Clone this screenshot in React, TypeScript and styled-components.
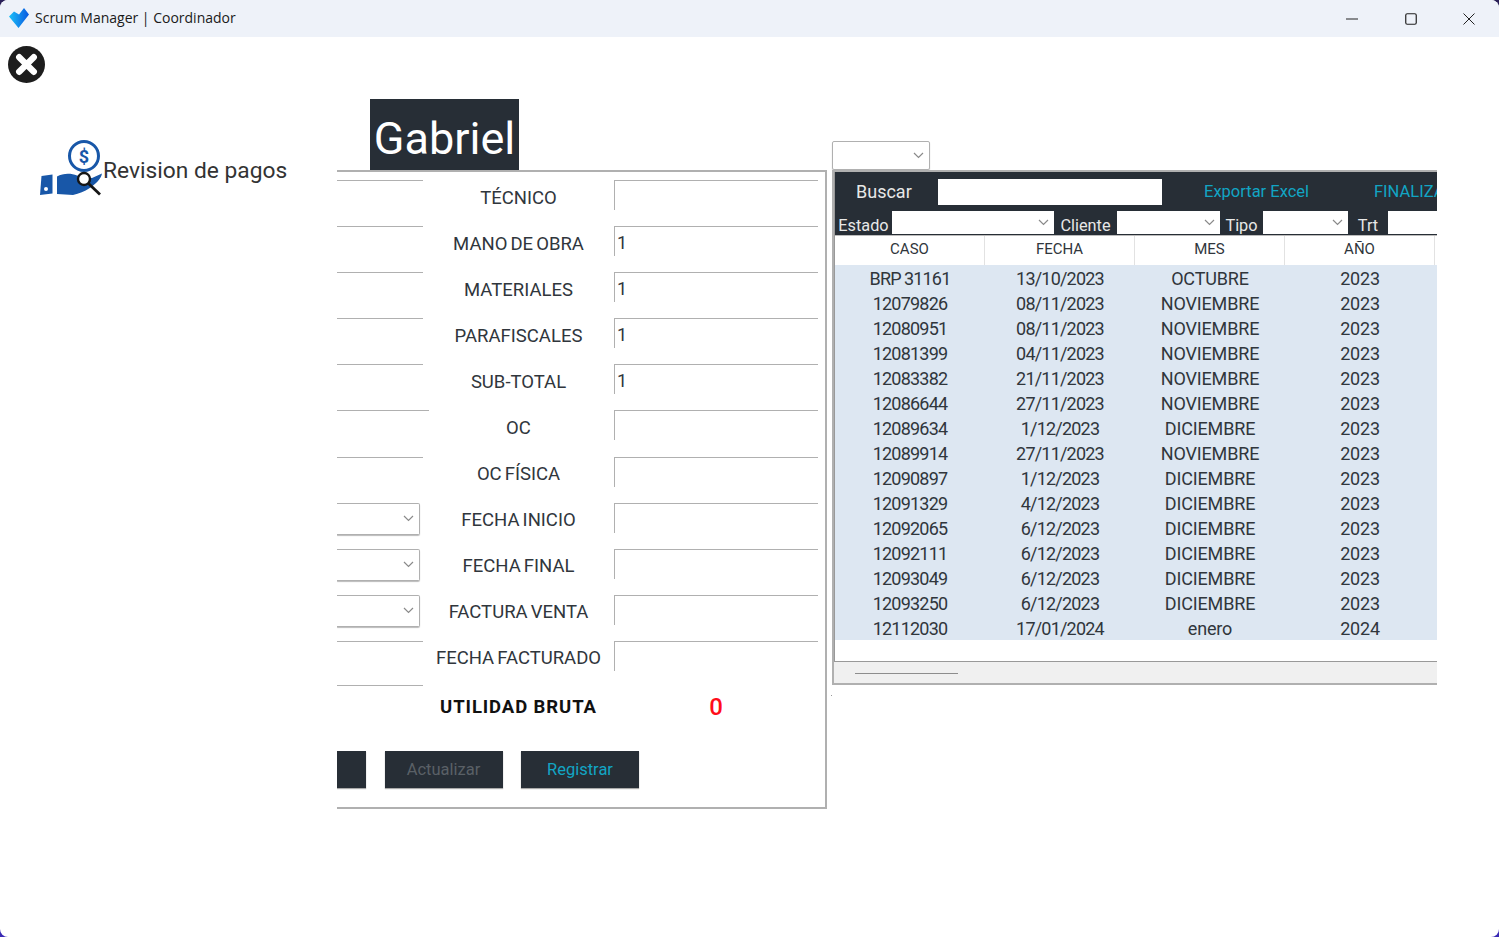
import React from 'react';
import styled, { createGlobalStyle } from 'styled-components';

const FONT = `Roboto, "Liberation Sans", sans-serif`;
const DARK = '#272e36';
const CYAN = '#12a5c4';
const LINE = '#b0b0b0';

const FORM_ROWS = [
  { label: 'TÉCNICO', value: '', left: 'line' },
  { label: 'MANO DE OBRA', value: '1', left: 'line' },
  { label: 'MATERIALES', value: '1', left: 'line' },
  { label: 'PARAFISCALES', value: '1', left: 'line' },
  { label: 'SUB-TOTAL', value: '1', left: 'line' },
  { label: 'OC', value: '', left: 'wide' },
  { label: 'OC FÍSICA', value: '', left: 'line' },
  { label: 'FECHA INICIO', value: '', left: 'select' },
  { label: 'FECHA FINAL', value: '', left: 'select' },
  { label: 'FACTURA VENTA', value: '', left: 'select' },
  { label: 'FECHA FACTURADO', value: '', left: 'line' },
];

const CASES = [
  ['BRP 31161', '13/10/2023', 'OCTUBRE', '2023'],
  ['12079826', '08/11/2023', 'NOVIEMBRE', '2023'],
  ['12080951', '08/11/2023', 'NOVIEMBRE', '2023'],
  ['12081399', '04/11/2023', 'NOVIEMBRE', '2023'],
  ['12083382', '21/11/2023', 'NOVIEMBRE', '2023'],
  ['12086644', '27/11/2023', 'NOVIEMBRE', '2023'],
  ['12089634', '1/12/2023', 'DICIEMBRE', '2023'],
  ['12089914', '27/11/2023', 'NOVIEMBRE', '2023'],
  ['12090897', '1/12/2023', 'DICIEMBRE', '2023'],
  ['12091329', '4/12/2023', 'DICIEMBRE', '2023'],
  ['12092065', '6/12/2023', 'DICIEMBRE', '2023'],
  ['12092111', '6/12/2023', 'DICIEMBRE', '2023'],
  ['12093049', '6/12/2023', 'DICIEMBRE', '2023'],
  ['12093250', '6/12/2023', 'DICIEMBRE', '2023'],
  ['12112030', '17/01/2024', 'enero', '2024'],
];

// the first two columns are almost all digits, set tighter than the words
const COLUMN_TRACKING = [-0.8, -0.8, -0.15, -0.2];

const Chevron = () => (
  <svg width="11" height="7" viewBox="0 0 11 7" fill="none">
    <path d="M1 1l4.5 4.5L10 1" stroke="#8a8a8a" strokeWidth="1.2" />
  </svg>
);

const AppLogo = () => (
  <svg width="22" height="22" viewBox="0 0 22 22">
    <defs>
      <linearGradient id="logoFill" x1="0" y1="0" x2="1" y2="0">
        <stop offset="0" stopColor="#1cc0f8" />
        <stop offset="1" stopColor="#0a58e0" />
      </linearGradient>
    </defs>
    <path d="M1 9.5L6 4.5l5 3L16 1l5 6.5L10.5 21z" fill="url(#logoFill)" strokeLinejoin="round" />
  </svg>
);

const CloseBadge = () => (
  <svg width="37" height="37" viewBox="0 0 38 38">
    <circle cx="19" cy="19" r="19" fill="#1d1d1d" />
    <path d="M11.5 11.5l15 15M26.5 11.5l-15 15" stroke="#fff" strokeWidth="6.5" strokeLinecap="round" />
  </svg>
);

const PaymentIcon = () => (
  <svg width="64" height="58" viewBox="0 0 64 58">
    <circle cx="45" cy="17" r="14.5" fill="#fff" stroke="#1857a8" strokeWidth="3" />
    <text x="45" y="23.5" fontSize="18" fontWeight="700" fill="#1857a8" textAnchor="middle" fontFamily="Roboto">$</text>
    <path d="M2.5 37L13.5 35.5V54.5L1 56z" fill="#1857a8" />
    <circle cx="7" cy="50" r="2" fill="#fff" />
    <path d="M18 37.5c6-3.5 14-3.5 20-1l7 1.5 8 1 10-4.5c-1 6-7 11-13 15-4 3-10 5-16 6.5l-16-1z" fill="#1857a8" />
    <circle cx="45" cy="40" r="6" fill="#fff" stroke="#161616" strokeWidth="2.4" />
    <path d="M49.5 44.5L61 55.5" stroke="#161616" strokeWidth="2.8" />
  </svg>
);

const App = () => {
  return (
    <>
      <GlobalStyle />
      <Window>
        <TitleBar>
          <WindowTitle>
            <AppLogo />
            <span>Scrum Manager | Coordinador</span>
          </WindowTitle>
          <WindowControls>
            <svg width="12" height="2" viewBox="0 0 12 2"><path d="M0 1h12" stroke="#222" /></svg>
            <svg width="12" height="12" viewBox="0 0 12 12"><rect x=".75" y=".75" width="10.5" height="10.5" rx="1.5" fill="none" stroke="#222" strokeWidth="1.2" /></svg>
            <svg width="12" height="12" viewBox="0 0 12 12"><path d="M.5.5l11 11M11.5.5l-11 11" stroke="#222" /></svg>
          </WindowControls>
        </TitleBar>
        <Workspace>
          <Sidebar>
            <CloseSlot><CloseBadge /></CloseSlot>
            <NavItem>
              <PaymentIcon />
              <NavLabel>Revision de pagos</NavLabel>
            </NavItem>
          </Sidebar>
          <Content>
            <TopBar>
              <UserTag>Gabriel</UserTag>
              <TopSelect><Chevron /></TopSelect>
            </TopBar>
            <Panels>
              <FormPanel>
                {FORM_ROWS.map((row) => (
                  <FormRow key={row.label}>
                    {row.left === 'select' ? (
                      <LeftSelect><Chevron /></LeftSelect>
                    ) : (
                      <LeftField $wide={row.left === 'wide'} />
                    )}
                    <FieldLabel>{row.label}</FieldLabel>
                    <ValueField>{row.value}</ValueField>
                  </FormRow>
                ))}
                <TotalRow>
                  <LeftField />
                  <TotalLabel>UTILIDAD BRUTA</TotalLabel>
                  <TotalValue>0</TotalValue>
                </TotalRow>
                <ButtonRow>
                  <ActionButton $width={29} />
                  <ActionButton $width={118} $muted>Actualizar</ActionButton>
                  <ActionButton $width={118}>Registrar</ActionButton>
                </ButtonRow>
              </FormPanel>
              <TablePanel>
                <TableFrame>
                  <SearchBar>
                    <SearchLabel>Buscar</SearchLabel>
                    <SearchInput />
                    <ToolLink>Exportar Excel</ToolLink>
                    <ToolLink>FINALIZAR</ToolLink>
                  </SearchBar>
                  <FilterBar>
                    <FilterLabel $width={57}>Estado</FilterLabel>
                    <FilterSelect $width={162}><Chevron /></FilterSelect>
                    <FilterLabel $width={63}>Cliente</FilterLabel>
                    <FilterSelect $width={103}><Chevron /></FilterSelect>
                    <FilterLabel $width={43}>Tipo</FilterLabel>
                    <FilterSelect $width={85}><Chevron /></FilterSelect>
                    <FilterLabel $width={40}>Trt</FilterLabel>
                    <FilterSelect $width={60} />
                  </FilterBar>
                  <HeaderRow>
                    {['CASO', 'FECHA', 'MES', 'AÑO'].map((title) => (
                      <HeaderCell key={title}>{title}</HeaderCell>
                    ))}
                  </HeaderRow>
                  <Rows>
                    {CASES.map((row) => (
                      <DataRow key={row[0]}>
                        {row.map((cell, i) => (
                          <DataCell key={i} $tracking={COLUMN_TRACKING[i]}>{cell}</DataCell>
                        ))}
                      </DataRow>
                    ))}
                  </Rows>
                </TableFrame>
                <ScrollTrack><ScrollThumb /></ScrollTrack>
              </TablePanel>
              <Speck />
            </Panels>
          </Content>
        </Workspace>
      </Window>
    </>
  );
};

const GlobalStyle = createGlobalStyle`
  html, body {
    margin: 0;
    height: 937px;
    overflow: hidden;
    background: linear-gradient(#2a2058, #3a2ab4);
  }
  body {
    font-family: ${FONT};
    color: #333;
  }
`;

const Window = styled.div`
  height: 937px;
  border-radius: 8px;
  overflow: hidden;
  background: #fff;
`;

const TitleBar = styled.header`
  height: 37px;
  display: flex;
  align-items: center;
  justify-content: space-between;
  background: #eef2f9;
`;

const WindowTitle = styled.div`
  display: flex;
  align-items: center;
  gap: 5px;
  padding: 0 0 2px 8px;
  font-family: "Open Sans", sans-serif;
  font-size: 14px;
  color: #1a1a1a;
`;

const WindowControls = styled.div`
  display: flex;
  align-items: center;
  gap: 46.5px;
  padding-right: 24px;
`;

const Workspace = styled.main`
  display: flex;
  height: 900px;
`;

const Sidebar = styled.aside`
  width: 337px;
  flex-shrink: 0;
`;

const CloseSlot = styled.div`
  padding: 9px 0 0 8px;
  height: 47px;
`;

const NavItem = styled.div`
  display: flex;
  align-items: center;
  margin: 46px 0 0 39px;
`;

const NavLabel = styled.span`
  padding-top: 4px;
  font-size: 22.75px;
  color: #333;
`;

const Content = styled.div`
  width: 1100px;
  overflow: hidden;
`;

const TopBar = styled.div`
  height: 133px;
  display: flex;
  align-items: flex-end;
`;

const UserTag = styled.div`
  width: 149px;
  height: 71px;
  margin-left: 33px;
  display: flex;
  align-items: center;
  justify-content: center;
  padding-top: 8px;
  box-sizing: border-box;
  background: ${DARK};
  color: #fff;
  font-size: 45px;
`;

const TopSelect = styled.div`
  width: 98px;
  height: 29px;
  margin-left: 313px;
  display: flex;
  align-items: center;
  justify-content: flex-end;
  padding-right: 5px;
  box-sizing: border-box;
  border: 1px solid ${LINE};
  border-radius: 2px;
  box-shadow: 0 1px 1px #bbb;
`;

const Panels = styled.div`
  position: relative;
  display: flex;
  align-items: flex-start;
  gap: 5px;
`;

const FormPanel = styled.section`
  width: 490px;
  height: 639px;
  flex-shrink: 0;
  box-sizing: border-box;
  padding-top: 8px;
  border-top: 2px solid ${LINE};
  border-right: 2px solid ${LINE};
  border-bottom: 2px solid ${LINE};
`;

const FormRow = styled.div`
  height: 46.1px;
  display: grid;
  grid-template-columns: 86px 191px 204px;
`;

const LeftField = styled.div<{ $wide?: boolean }>`
  width: ${(p) => (p.$wide ? '92px' : '86px')};
  height: 30px;
  box-sizing: border-box;
  border-top: 1.5px solid ${LINE};
`;

const LeftSelect = styled.div`
  width: 83px;
  height: 32px;
  box-sizing: border-box;
  display: flex;
  align-items: center;
  justify-content: flex-end;
  padding-right: 5px;
  border: 1px solid ${LINE};
  border-left: 0;
  border-radius: 0 2px 2px 0;
  box-shadow: 0 1px 1px #bbb;
`;

const FieldLabel = styled.div`
  height: 35px;
  display: flex;
  align-items: center;
  justify-content: center;
  font-size: 18.5px;
  word-spacing: -1.5px;
  color: #30363c;
`;

const ValueField = styled.div`
  height: 30px;
  box-sizing: border-box;
  padding: 2px 0 0 2px;
  border-top: 1.5px solid ${LINE};
  border-left: 1.5px solid ${LINE};
  font-size: 18px;
  line-height: 28px;
  color: #30363c;
`;

const TotalRow = styled(FormRow)`
  height: 66px;
  margin-top: -2px;
`;

const TotalLabel = styled(FieldLabel)`
  height: 44px;
  font-weight: 700;
  word-spacing: 0;
  letter-spacing: 0.9px;
  color: #111;
`;

const TotalValue = styled.div`
  height: 44px;
  display: flex;
  align-items: center;
  justify-content: center;
  font-size: 24px;
  font-weight: 500;
  color: #ff0d1a;
`;

const ButtonRow = styled.div`
  display: flex;
  gap: 18.5px;
`;

const ActionButton = styled.div<{ $width: number; $muted?: boolean }>`
  width: ${(p) => p.$width}px;
  height: 37px;
  display: flex;
  align-items: center;
  justify-content: center;
  background: ${DARK};
  color: ${(p) => (p.$muted ? '#5a6066' : CYAN)};
  font-size: 16.5px;
  box-shadow: 0 1px 1px #aaa;
`;

const TablePanel = styled.section`
  width: 605px;
  height: 515px;
  flex-shrink: 0;
  overflow: hidden;
  box-sizing: border-box;
  border-top: 2px solid ${LINE};
  border-left: 2px solid ${LINE};
  border-bottom: 2px solid ${LINE};
  background: #f0f0f0;
`;

const TableFrame = styled.div`
  height: 489px;
  background: #fff;
  border-bottom: 1px solid #999;
  border-left: 1px solid #999;
`;

const SearchBar = styled.div`
  height: 39px;
  display: flex;
  align-items: center;
  background: ${DARK};
  white-space: nowrap;
`;

const SearchLabel = styled.span`
  width: 103px;
  flex-shrink: 0;
  box-sizing: border-box;
  padding-left: 21px;
  color: #e8e8e8;
  font-size: 18px;
`;

const SearchInput = styled.div`
  width: 224px;
  height: 26px;
  flex-shrink: 0;
  background: #fff;
`;

const ToolLink = styled.span`
  width: 170px;
  margin-left: 42px;
  margin-right: -42px;
  flex-shrink: 0;
  color: ${CYAN};
  font-size: 16.5px;
`;

const FilterBar = styled.div`
  height: 24px;
  display: flex;
  background: ${DARK};
`;

const FilterLabel = styled.span<{ $width: number }>`
  width: ${(p) => p.$width}px;
  flex-shrink: 0;
  box-sizing: border-box;
  padding-top: 4px;
  color: #e8e8e8;
  font-size: 16.3px;
  line-height: 22px;
  overflow: hidden;
  text-align: center;
`;

const FilterSelect = styled.div<{ $width: number }>`
  width: ${(p) => p.$width}px;
  height: 23px;
  flex-shrink: 0;
  display: flex;
  align-items: center;
  justify-content: flex-end;
  padding-right: 5px;
  box-sizing: border-box;
  background: #fff;
`;

const HeaderRow = styled.div`
  height: 30px;
  display: grid;
  grid-template-columns: repeat(4, 150px);
  box-sizing: border-box;
  border-top: 1px solid #bcbcbc;
  background: #fff;
`;

const HeaderCell = styled.div`
  display: flex;
  align-items: center;
  justify-content: center;
  padding-bottom: 3px;
  border-right: 1px solid #e2e2e2;
  color: #30363c;
  font-size: 15px;
`;

const Rows = styled.div`
  background: #dde7f2;
`;

const DataRow = styled.div`
  height: 25px;
  display: grid;
  grid-template-columns: repeat(4, 150px);
`;

const DataCell = styled.div<{ $tracking: number }>`
  display: flex;
  align-items: center;
  justify-content: center;
  padding-top: 1px;
  color: #30363c;
  font-size: 18px;
  word-spacing: -0.5px;
  letter-spacing: ${(p) => p.$tracking}px;
`;

const ScrollTrack = styled.div`
  height: 22px;
  display: flex;
  align-items: center;
  padding-left: 21px;
`;

const ScrollThumb = styled.div`
  width: 103px;
  height: 1px;
  background: #8d8d8d;
`;

const Speck = styled.i`
  position: absolute;
  left: 494px;
  top: 525px;
  width: 1px;
  height: 1px;
  background: #999;
`;

export default App;
